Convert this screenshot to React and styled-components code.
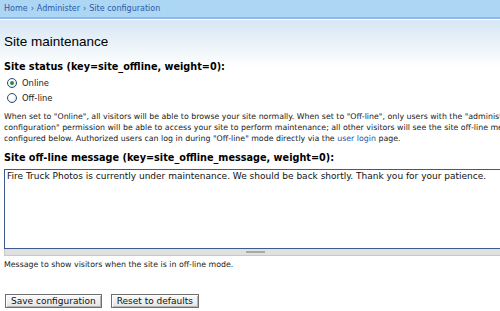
import React from 'react';
import styled, { createGlobalStyle } from 'styled-components';

const GlobalStyle = createGlobalStyle`
  html, body {
    margin: 0;
    padding: 0;
    background: #fff;
    overflow: hidden;
  }
  body {
    font-family: "DejaVu Sans", Verdana, sans-serif;
    color: #000;
  }
`;

const Page = styled.div`
  width: 500px;
  height: 311px;
  overflow: hidden;
  background: linear-gradient(to bottom, #d6e6f3 20px, #ffffff 68px);
`;

const Header = styled.div`
  height: 17px;
  background: #acd6f4;
  border-bottom: 2px solid #90b9e9;
  box-shadow: 0 1px 0 #ffffff;
  display: flex;
  align-items: center;
  padding-left: 4px;
  font-size: 8px;
  color: #2b5ca8;
`;

const Crumb = styled.a`
  color: #2b5ca8;
  text-decoration: none;
`;

const Sep = styled.span`
  margin: 0 3px;
`;

const Content = styled.div`
  padding: 0 4px;
`;

const Title = styled.h1`
  font-family: "Liberation Sans", Arial, sans-serif;
  font-weight: normal;
  font-size: 13.5px;
  line-height: 16px;
  margin: 15px 0 10px;
`;

const Label = styled.div`
  font-weight: bold;
  font-size: 9.7px;
  line-height: 13px;
  margin-top: ${(p) => p.$top || 0}px;
  margin-bottom: ${(p) => p.$gap || 0}px;
`;

const RadioRow = styled.label`
  display: flex;
  align-items: center;
  gap: 5px;
  height: 15px;
  padding-left: 3px;
  font-size: 8.4px;
  color: #222;
`;

const RadioDot = styled.span`
  width: 8px;
  height: 8px;
  border-radius: 50%;
  border: 1px solid #2b4a78;
  background: radial-gradient(circle at 40% 40%, #fff 30%, #d4dbe3 100%);
  display: flex;
  align-items: center;
  justify-content: center;

  &::after {
    content: '';
    width: 4px;
    height: 4px;
    border-radius: 50%;
    background: ${(p) => (p.$checked ? '#2f8a3a' : 'transparent')};
  }
`;

const Desc = styled.div`
  font-size: 7.85px;
  line-height: 11px;
  color: #222;
  white-space: nowrap;
  margin-top: ${(p) => p.$top || 0}px;

  a {
    color: #27569f;
    text-decoration: none;
  }
`;

const Area = styled.div`
  width: 520px;
  margin-top: 5px;
`;

const TextBox = styled.div`
  height: 76px;
  border: 1px solid #3d5a8e;
  background: #fff;
  padding: 1px 2px;
  font-size: 9px;
  line-height: 11px;
  color: #111;
  white-space: nowrap;
`;

const Grippie = styled.div`
  height: 6px;
  background: #e0e0e0;
  border: 1px solid #c8c8c8;
  border-top: none;
  display: flex;
  justify-content: center;
  align-items: center;

  &::after {
    content: '';
    width: 19px;
    height: 2px;
    margin-left: -18px;
    background: #a8a8a8;
  }
`;

const Buttons = styled.div`
  display: flex;
  gap: 9px;
  margin-top: 24px;
  padding-left: 1px;
`;

const Button = styled.button`
  font-family: "DejaVu Sans", Verdana, sans-serif;
  font-size: 9px;
  color: #111;
  background: linear-gradient(to bottom, #fbfbfb, #e4e4e4);
  border: 1px solid #6f6f6f;
  box-shadow: inset 1px 1px 0 #fff, inset -1px -1px 0 #b5b5b5;
  padding: 0 5px;
  height: 14px;
  line-height: 12px;
`;

export default function App() {
  return (
    <Page>
      <GlobalStyle />
      <Header>
        <Crumb href="#">Home</Crumb>
        <Sep>›</Sep>
        <Crumb href="#">Administer</Crumb>
        <Sep>›</Sep>
        <Crumb href="#">Site configuration</Crumb>
      </Header>
      <Content>
        <Title>Site maintenance</Title>
        <Label $gap={2}>Site status (key=site_offline, weight=0):</Label>
        <RadioRow>
          <RadioDot $checked />
          Online
        </RadioRow>
        <RadioRow>
          <RadioDot />
          Off-line
        </RadioRow>
        <Desc $top={6}>
          When set to "Online", all visitors will be able to browse your site normally. When set to "Off-line", only users with the "administer site
          <br />
          configuration" permission will be able to access your site to perform maintenance; all other visitors will see the site off-line message
          <br />
          configured below. Authorized users can log in during "Off-line" mode directly via the <a href="#">user login</a> page.
        </Desc>
        <Label $top={7}>Site off-line message (key=site_offline_message, weight=0):</Label>
        <Area>
          <TextBox>
            Fire Truck Photos is currently under maintenance. We should be back shortly. Thank you for your patience.
          </TextBox>
          <Grippie />
        </Area>
        <Desc $top={3}>Message to show visitors when the site is in off-line mode.</Desc>
        <Buttons>
          <Button>Save configuration</Button>
          <Button>Reset to defaults</Button>
        </Buttons>
      </Content>
    </Page>
  );
}
